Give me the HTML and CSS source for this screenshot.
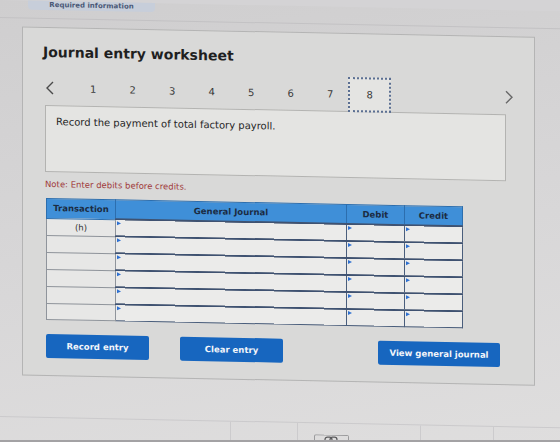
FILE: index.html
```html
<!DOCTYPE html>
<html lang="en">
<head>
    <meta charset="UTF-8">
    <meta name="viewport" content="width=device-width, initial-scale=1.0">
    <title>Journal entry worksheet</title>
    <link rel="stylesheet" href="styles.css">
</head>
<body>
    <div class="screen">
        <div class="top-bar">
            <span class="tab">Required information</span>
        </div>

        <div class="panel">
            <h1>Journal entry worksheet</h1>

            <div class="steps">
                <span class="chevron">
                    <svg width="10" height="14" viewBox="0 0 10 14"><polyline points="8,1 2,7 8,13" /></svg>
                </span>
                <span class="step first">1</span>
                <span class="step">2</span>
                <span class="step">3</span>
                <span class="step">4</span>
                <span class="step">5</span>
                <span class="step">6</span>
                <span class="step">7</span>
                <span class="step active">8</span>
                <span class="chevron next">
                    <svg width="10" height="14" viewBox="0 0 10 14"><polyline points="2,1 8,7 2,13" /></svg>
                </span>
            </div>

            <div class="prompt">Record the payment of total factory payroll.</div>

            <p class="note">Note: Enter debits before credits.</p>

            <table class="journal">
                <thead>
                    <tr>
                        <th class="col-trans">Transaction</th>
                        <th class="col-account">General Journal</th>
                        <th class="col-amount">Debit</th>
                        <th class="col-amount">Credit</th>
                    </tr>
                </thead>
                <tbody id="journal-rows">
                    <!-- rows are filled in by the script below -->
                </tbody>
            </table>

            <div class="actions">
                <button class="btn">Record entry</button>
                <button class="btn">Clear entry</button>
                <button class="btn btn-view">View general journal</button>
            </div>
        </div>

        <div class="footer">
            <span class="footer-cell"></span>
            <span class="footer-cell link-cell">
                <span class="link-box">
                    <svg width="14" height="8" viewBox="0 0 14 8">
                        <rect x="1" y="1.5" width="7" height="5" rx="2.5" />
                        <rect x="6" y="1.5" width="7" height="5" rx="2.5" />
                    </svg>
                </span>
            </span>
            <span class="footer-cell"></span>
            <span class="footer-cell"></span>
        </div>
    </div>

    <script>
        const rows = ['(h)', '', '', '', '', ''];
        const body = document.getElementById('journal-rows');

        rows.forEach(label => {
            const tr = document.createElement('tr');
            tr.innerHTML = `
                <td class="trans">${label}</td>
                <td class="entry"></td>
                <td class="entry"></td>
                <td class="entry"></td>
            `;
            body.appendChild(tr);
        });
    </script>
</body>
</html>
```

FILE: styles.css
```css
html {
    background-color: #a3a2a4;
}

body {
    margin: 0;
    width: 560px;
    height: 440px;
    overflow: hidden;
    background-color: #d4d3d5;
    font-family: "DejaVu Sans", Verdana, sans-serif;
    color: #2b2b2b;
}

/* the whole screen leans a little, right side lower */
.screen {
    width: 560px;
    height: 442px;
    transform: skewY(1.15deg);
    transform-origin: 0 0;
    background: linear-gradient(170deg, #cfcecf 0%, #d8d7d8 55%, #dfdede 100%);
}

.top-bar {
    height: 17px;
    border-bottom: 1px solid #c3c2c4;
    padding-left: 28px;
}

.tab {
    display: block;
    width: 127px;
    height: 9px;
    background-color: #c7ceda;
    border-radius: 0 0 4px 4px;
    font-size: 7px;
    font-weight: bold;
    line-height: 8px;
    color: #4a5876;
    text-align: center;
    overflow: hidden;
}

.panel {
    width: 473px;
    margin: 8px 0 0 22px;
    padding: 16px 18px 17px 20px;
    border: 1px solid #b4b4b4;
    background-color: #d9d9d8;
}

h1 {
    margin: 0;
    font-size: 14px;
    line-height: 16px;
    font-weight: bold;
    color: #1f1f1f;
}

.steps {
    display: flex;
    align-items: center;
    height: 34px;
    margin-top: 11px;
    font-size: 10px;
    color: #3a3a3a;
}

.chevron {
    width: 14px;
    display: flex;
    justify-content: center;
}

.chevron svg polyline {
    fill: none;
    stroke: #4a4a4a;
    stroke-width: 1.4;
}

.chevron.next {
    margin-left: auto;
}

.chevron.next svg polyline {
    stroke: #6a6a6a;
}

.step {
    width: 39.5px;
    text-align: center;
}

.step.first {
    margin-left: 16.5px;
}

.step.active {
    width: 39px;
    height: 31px;
    margin: 0 -1.75px;
    display: flex;
    align-items: center;
    justify-content: center;
    border: 2px dotted #5b6f92;
    background-color: #e4e4e2;
}

.prompt {
    width: 449px;
    height: 55px;
    margin-left: 2px;
    padding: 10px 0 0 10px;
    border: 1px solid #b3b3b1;
    background-color: #e4e4e2;
    font-size: 10px;
    line-height: 12px;
    color: #262626;
}

.note {
    margin: 6px 0 0 2px;
    font-size: 8.5px;
    line-height: 12px;
    color: #a0393a;
}

.journal {
    margin: 8px 0 0 3px;
    width: 413px;
    border-collapse: collapse;
    table-layout: fixed;
}

.journal th {
    height: 18px;
    padding: 0;
    background-color: #3f8fd8;
    border: 1px solid #2c6eae;
    font-size: 8.5px;
    font-weight: bold;
    color: #1b2b42;
}

.col-trans { width: 68px; }
.col-account { width: 230px; }
.col-amount { width: 57px; }

.journal td {
    height: 15px;
    padding: 0;
    font-size: 8.5px;
    text-align: center;
    color: #333;
}

.trans {
    background-color: #e7e7e6;
    border: 1px solid #8f949b;
}

.entry {
    position: relative;
    background-color: #ebebea;
    border: 1px solid #4a5e7c;
    border-top: 2px solid #3f5271;
}

/* little marker in the corner of each input cell */
.entry::before {
    content: "";
    position: absolute;
    top: 1px;
    left: 1px;
    border-left: 4px solid #2c6fd1;
    border-top: 2.5px solid transparent;
    border-bottom: 2.5px solid transparent;
}

.actions {
    display: flex;
    gap: 31px;
    margin: 14px 0 0 3px;
}

.btn {
    height: 24px;
    width: 103px;
    padding: 0;
    border: none;
    border-radius: 2px;
    background-color: #1766bf;
    color: #f2f5fa;
    font-family: "DejaVu Sans", Verdana, sans-serif;
    font-size: 8.5px;
    font-weight: bold;
    cursor: pointer;
}

.btn-view {
    width: 122px;
    margin-left: 64px;
}

.footer {
    display: flex;
    margin-top: 41px;
    height: 30px;
    border-top: 1px solid #cbcacc;
    padding-left: 230px;
}

.footer-cell {
    width: 67px;
    border-left: 1px solid #cccbcd;
}

.footer-cell.link-cell {
    width: 125px;
    padding: 11px 0 0 16px;
    box-sizing: border-box;
}

.footer-cell:nth-child(3) {
    width: 73px;
}

.link-box {
    display: flex;
    justify-content: center;
    width: 33px;
    height: 10px;
    border: 1px solid #9a9a9c;
    border-bottom: none;
    border-radius: 2px 2px 0 0;
}

.link-box rect {
    fill: none;
    stroke: #5a5a5c;
    stroke-width: 1.2;
}
```
